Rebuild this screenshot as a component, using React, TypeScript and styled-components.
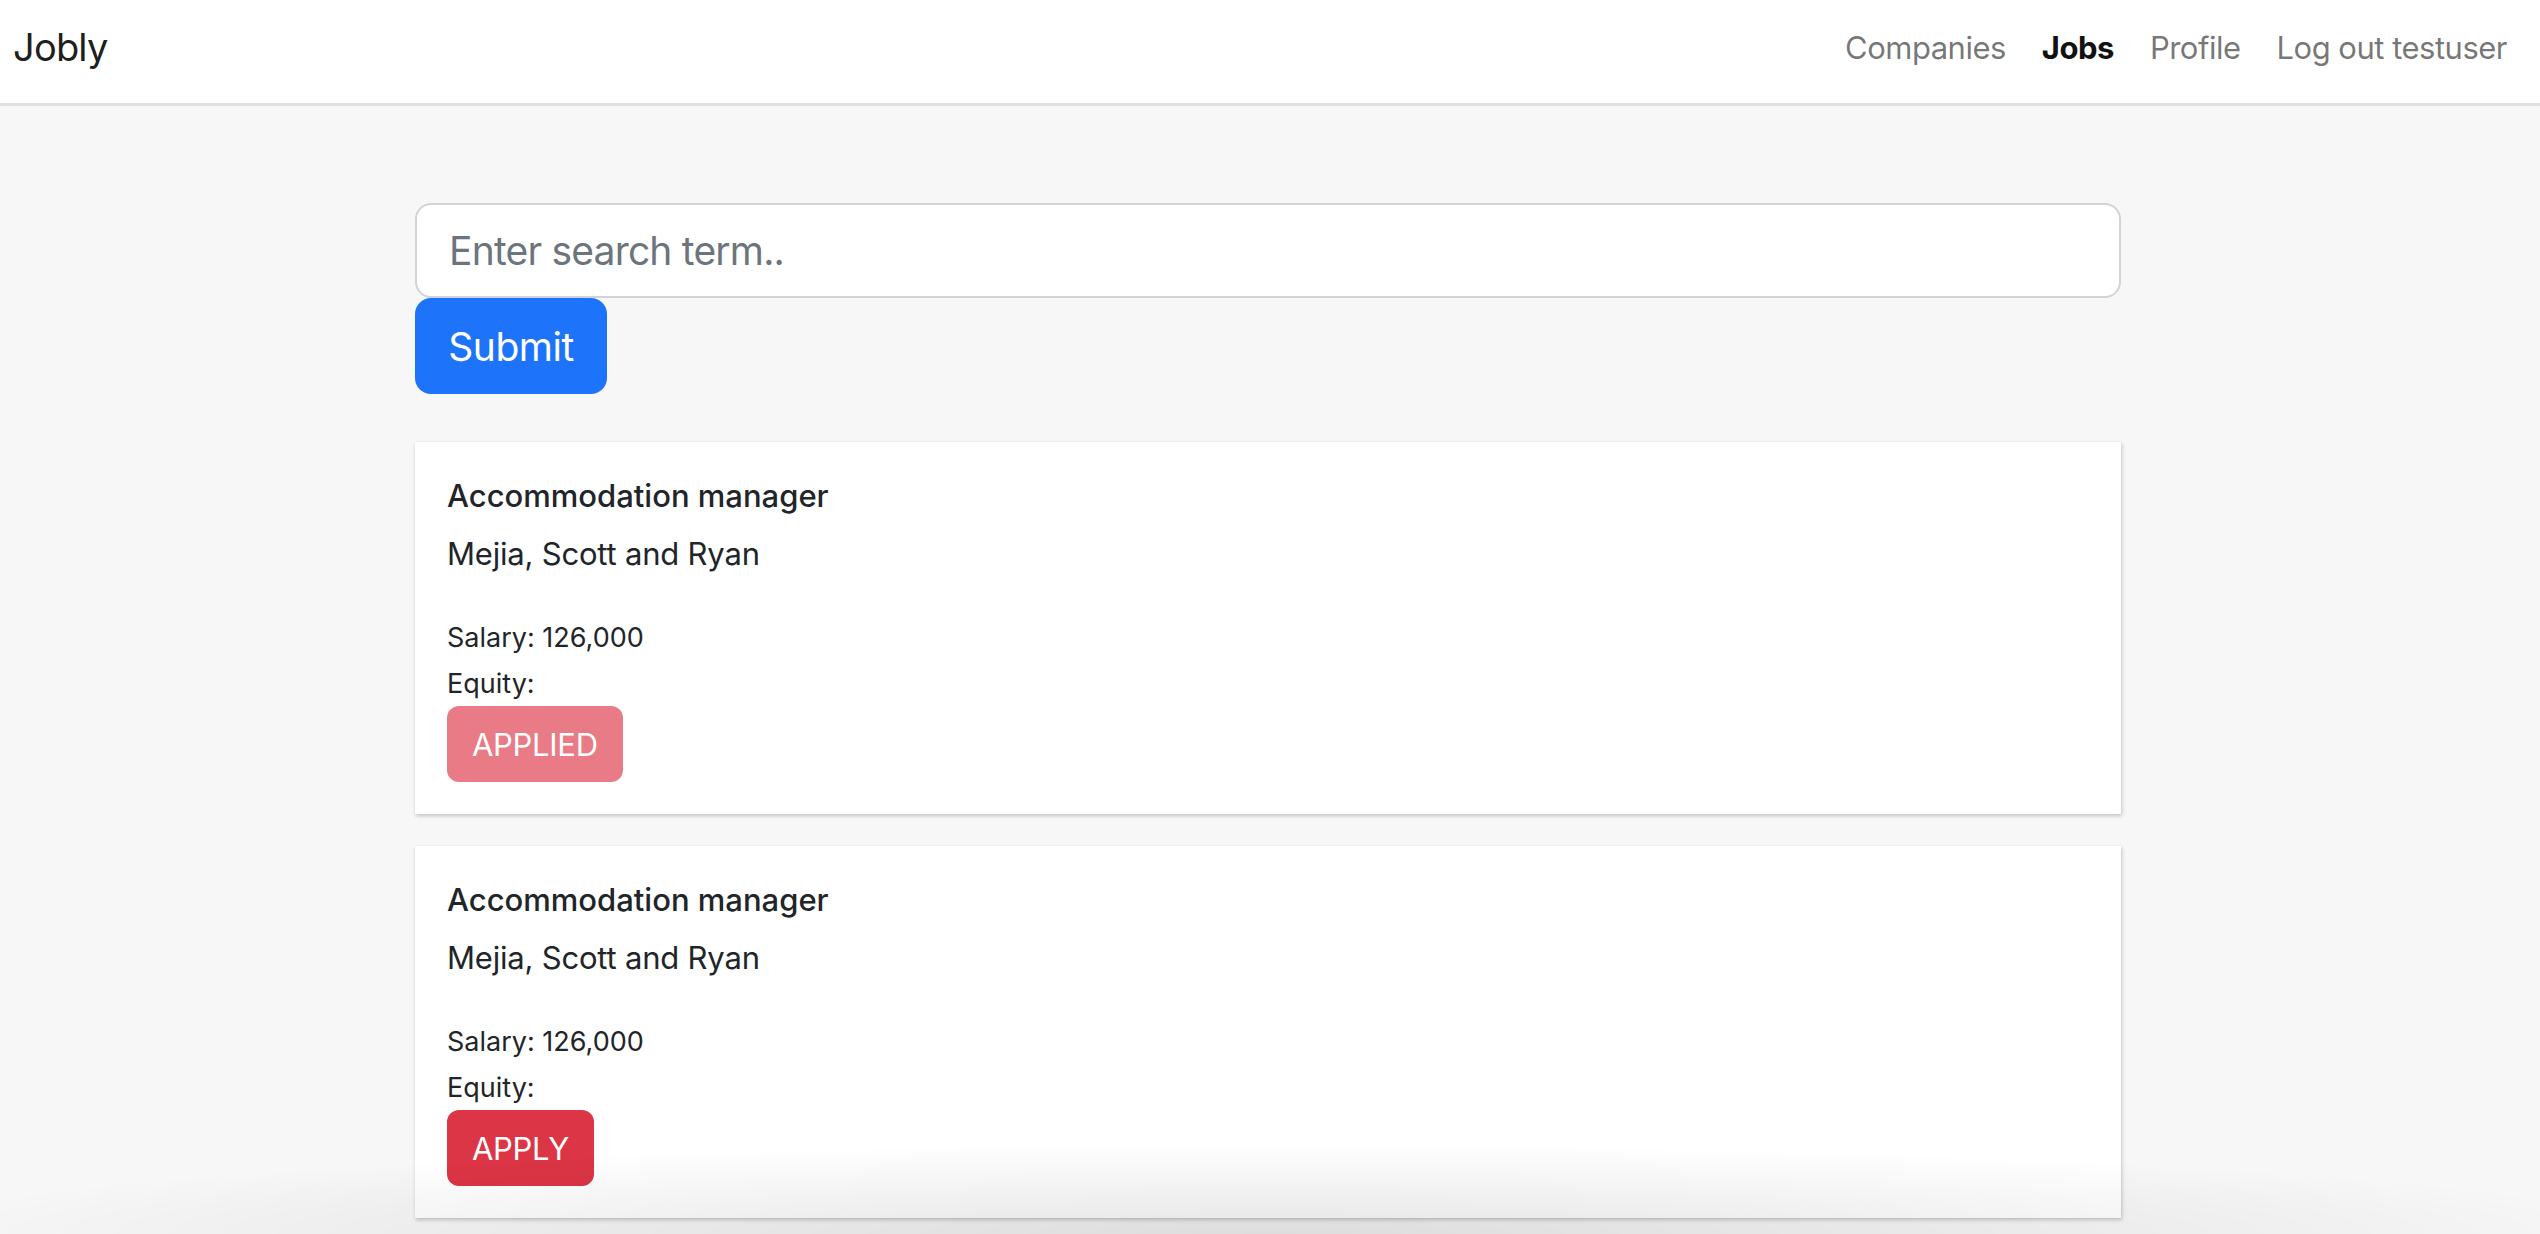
import styled, { createGlobalStyle } from "styled-components"

const GlobalStyle = createGlobalStyle`
	* {
		box-sizing: border-box;
	}

	html, body {
		margin: 0;
		padding: 0;
		background: #f7f7f7;
		font-family: Inter, "Noto Sans", "Liberation Sans", sans-serif;
		color: #212529;
		-webkit-font-smoothing: antialiased;
	}
`

interface Job {
	id: number
	title: string
	companyName: string
	salary: string
	equity: string
	applied: boolean
}

const JOBS: Job[] = [
	{ id: 1, title: "Accommodation manager", companyName: "Mejia, Scott and Ryan", salary: "126,000", equity: "", applied: true },
	{ id: 2, title: "Accommodation manager", companyName: "Mejia, Scott and Ryan", salary: "126,000", equity: "", applied: false },
]

const NAV_LINKS = [
	{ label: "Companies", active: false },
	{ label: "Jobs", active: true },
	{ label: "Profile", active: false },
	{ label: "Log out testuser", active: false },
]

function NavBar() {
	return (
		<Nav>
			<Brand>Jobly</Brand>
			<NavList>
				{NAV_LINKS.map((link) => (
					<NavLink key={link.label} $active={link.active}>
						{link.label}
					</NavLink>
				))}
			</NavList>
		</Nav>
	)
}

function SearchForm() {
	return (
		<Form onSubmit={(e) => e.preventDefault()}>
			<SearchInput placeholder="Enter search term.." />
			<SubmitButton type="submit">Submit</SubmitButton>
		</Form>
	)
}

function JobCard({ job }: { job: Job }) {
	return (
		<Card>
			<CardTitle>{job.title}</CardTitle>
			<CompanyName>{job.companyName}</CompanyName>
			<Detail>Salary: {job.salary}</Detail>
			<Detail $last>Equity: {job.equity}</Detail>
			<ApplyButton disabled={job.applied}>{job.applied ? "APPLIED" : "APPLY"}</ApplyButton>
		</Card>
	)
}

export default function App() {
	return (
		<>
			<GlobalStyle />
			<NavBar />
			<Page>
				<Main>
					<SearchForm />
					<JobList>
						{JOBS.map((job) => (
							<JobCard key={job.id} job={job} />
						))}
					</JobList>
				</Main>
			</Page>
			<BottomShade />
		</>
	)
}

const Nav = styled.nav`
	height: 106px;
	background: #ffffff;
	border-bottom: 3px solid #dfdfdf;
	display: flex;
	align-items: center;
	justify-content: space-between;
	padding: 0 33px 9px 13px;
`

const Brand = styled.a`
	font-size: 38px;
	line-height: 48px;
	color: rgba(0, 0, 0, 0.9);
	letter-spacing: -0.8px;
	cursor: pointer;
`

const NavList = styled.div`
	display: flex;
	align-items: center;
	gap: 36px;
	padding-top: 2px;
`

const NavLink = styled.a<{ $active: boolean }>`
	font-size: 31px;
	line-height: 40px;
	letter-spacing: -0.5px;
	font-weight: ${(p) => (p.$active ? 700 : 400)};
	color: ${(p) => (p.$active ? "#111111" : "rgba(0, 0, 0, 0.55)")};
	cursor: pointer;
`

const Page = styled.div`
	padding-right: 4px;
`

const Main = styled.main`
	width: 1706px;
	margin: 0 auto;
	padding: 97px 0 40px;
`

const Form = styled.form`
	display: flex;
	flex-direction: column;
	align-items: flex-start;
`

const SearchInput = styled.input`
	width: 100%;
	height: 95px;
	padding: 0 32px;
	font-family: inherit;
	font-size: 39px;
	letter-spacing: -0.8px;
	color: #212529;
	background: #ffffff;
	border: 2px solid #ced4da;
	border-radius: 16px;
	outline: none;

	&::placeholder {
		color: #6c757d;
	}
`

const SubmitButton = styled.button`
	height: 96px;
	width: 192px;
	padding: 0;
	font-family: inherit;
	font-size: 39px;
	letter-spacing: -0.5px;
	color: #ffffff;
	background: #1d74fb;
	border: none;
	border-radius: 16px;
	cursor: pointer;
`

const JobList = styled.div`
	display: flex;
	flex-direction: column;
	gap: 32px;
	margin-top: 48px;
`

const Card = styled.div`
	background: #ffffff;
	padding: 34px 32px 32px;
	box-shadow: 1px 2px 4px rgba(0, 0, 0, 0.2), 0 0 2px rgba(0, 0, 0, 0.06);
	display: flex;
	flex-direction: column;
	align-items: flex-start;
`

const CardTitle = styled.h6`
	margin: 0 0 14px;
	font-size: 31px;
	line-height: 40px;
	font-weight: 500;
	letter-spacing: 0;
	color: #212529;
`

const CompanyName = styled.p`
	margin: 0 0 36px;
	font-size: 31px;
	line-height: 48px;
	letter-spacing: -0.2px;
	color: #212529;
`

const Detail = styled.div<{ $last?: boolean }>`
	font-size: 27px;
	line-height: ${(p) => (p.$last ? "44px" : "48px")};
	letter-spacing: 0;
	color: #212529;
`

const ApplyButton = styled.button`
	height: 76px;
	padding: 0 25px;
	font-family: inherit;
	font-size: 31px;
	letter-spacing: -0.3px;
	color: #ffffff;
	background: #dc3545;
	border: none;
	border-radius: 12px;
	cursor: pointer;

	&:disabled {
		opacity: 0.65;
		cursor: default;
	}
`

const BottomShade = styled.div`
	position: fixed;
	left: 0;
	right: 0;
	bottom: 0;
	height: 90px;
	pointer-events: none;
	background: radial-gradient(ellipse 55% 100% at 50% 100%, rgba(0, 0, 0, 0.1), rgba(0, 0, 0, 0) 100%);
`
